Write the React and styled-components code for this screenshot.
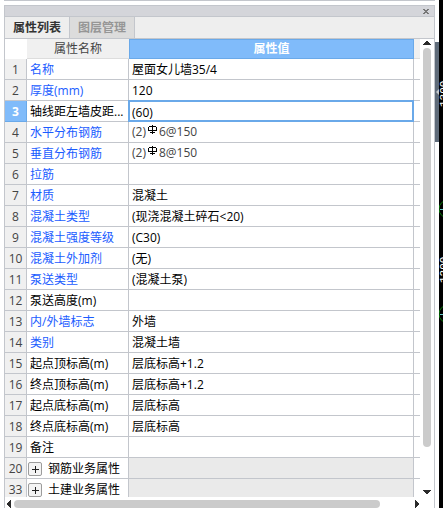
import React from "react";
import styled, { createGlobalStyle } from "styled-components";

const GlobalStyle = createGlobalStyle`
  *, *::before, *::after { box-sizing: border-box; }
  body { margin: 0; background: #fff; overflow: hidden; }
  body, button, input { font-family: "Open Sans", "Noto Sans CJK SC", sans-serif; font-size: 12px; }
`;

const line = "#c3c6cc";

const Workspace = styled.div`
  display: flex;
  height: 100vh;
  padding-left: 4px;
`;
const Dock = styled.div`
  flex: 1;
  min-width: 0;
  display: flex;
  flex-direction: column;
  border-top: 1px solid ${line};
  padding-top: 4px;
`;
const Panel = styled.section`
  flex: 1;
  min-height: 0;
  display: flex;
  flex-direction: column;
  border: 1px solid ${line};
  border-bottom: 0;
`;
const TitleBar = styled.header`
  display: flex;
  flex: none;
  justify-content: flex-end;
  align-items: center;
  height: 11px;
  padding-right: 5px;
  background: #d4d5da;
  border-bottom: 1px solid ${line};
`;
const CloseButton = styled.button`
  display: flex;
  padding: 0;
  border: 0;
  background: none;
`;
const TabBar = styled.div`
  display: flex;
  flex: none;
  height: 22px;
  background: #eee;
  border-bottom: 1px solid ${line};
`;
const Tab = styled.button`
  width: 65px;
  padding: 0;
  border: 0;
  border-right: 1px solid ${line};
  font-weight: 700;
  line-height: 20px;
  color: ${(p) => (p.$active ? "#333" : "#969696")};
  background: ${(p) => (p.$active ? "#eee" : "#dcdcdc")};
`;
const Body = styled.div`
  flex: 1;
  min-height: 0;
  display: grid;
  grid-template-columns: minmax(0, 1fr) 14px;
  grid-template-rows: minmax(0, 1fr) 11px;
`;
const Viewport = styled.div`
  overflow: hidden;
`;
const Table = styled.table`
  width: 100%;
  table-layout: fixed;
  border-collapse: separate;
  border-spacing: 0;
  line-height: 18px;
`;
const Col = styled.col`
  width: ${(p) => p.$width};
`;
const HeadRow = styled.tr`
  height: 20px;
`;
const HeadCell = styled.th`
  height: 20px;
  padding: 0;
  font-weight: ${(p) => (p.$selected ? 700 : 400)};
  color: ${(p) => (p.$selected ? "#fff" : "#444")};
  background: ${(p) => (p.$selected ? "#80bbfa" : p.$corner ? "#fff" : "#f0f0f0")};
  border: ${(p) => (p.$selected ? "1px solid #6aa9e9" : "0")};
  border-bottom: 1px solid ${(p) => (p.$selected ? "#6aa9e9" : p.$corner ? "#fff" : "#ddd")};
`;
const Cell = styled.td`
  height: 21px;
  padding: ${(p) => (p.$soft ? "0" : "2px")} 0 0 ${(p) => (p.$group ? "1px" : "3px")};
  white-space: nowrap;
  color: ${(p) => (p.$link ? "#1a5cff" : p.$soft ? "#444" : "#000")};
  background: ${(p) => (p.$shaded ? "#eaeaea" : "#fff")};
  border-right: 1px solid ${line};
  border-bottom: 1px solid ${line};
`;
const SelectedCell = styled(Cell)`
  position: relative;
  &::after {
    content: "";
    position: absolute;
    inset: -1px;
    border: 2px solid #6aa9e9;
    pointer-events: none;
  }
`;
const IndexCell = styled.th`
  height: 21px;
  padding: 2px 0 0;
  font-weight: ${(p) => (p.$selected ? 700 : 400)};
  color: ${(p) => (p.$selected ? "#fff" : "#444")};
  background: ${(p) => (p.$selected ? "#80bbfa" : "#f0f0f0")};
  border-right: 1px solid ${(p) => (p.$selected ? "#6aa9e9" : line)};
  border-bottom: 1px solid ${(p) => (p.$selected ? "#6aa9e9" : line)};
`;
const EdgeCell = styled.td`
  padding: 0;
  border-bottom: 1px solid ${(p) => (p.$head ? "#ddd" : line)};
  background: ${(p) => (p.$head ? "#f0f0f0" : "#fff")};
`;
const ValueInput = styled.input`
  display: block;
  width: 100%;
  height: 18px;
  padding: 0;
  border: 0;
  outline: 0;
  color: #000;
  background: transparent;
`;
const Group = styled.span`
  display: flex;
  align-items: center;
  gap: 6px;
`;
const ExpandButton = styled.button`
  display: flex;
  align-items: center;
  justify-content: center;
  width: 14px;
  height: 14px;
  padding: 0;
  border: 1px solid #9c9c9c;
  border-radius: 2px;
  background: #f4f4f4;
`;
const RebarIcon = styled.svg`
  display: inline-block;
  width: 9px;
  height: 9px;
  margin: 0 2px;
  vertical-align: 2px;
`;
const ScrollBar = styled.div`
  display: flex;
  flex-direction: ${(p) => (p.$vertical ? "column" : "row")};
  align-items: center;
  gap: 3px;
  padding: ${(p) => (p.$vertical ? "2px 2px 3px 2px" : "3px 1px 0 2px")};
`;
const Track = styled.div`
  flex: 1;
  align-self: stretch;
  display: flex;
  flex-direction: ${(p) => (p.$vertical ? "column" : "row")};
  padding: ${(p) => (p.$vertical ? "0 1px" : "0")};
`;
const Thumb = styled.div`
  flex: 0 0 ${(p) => p.$size};
  border-radius: 4px;
  background: #cbcbcb;
`;
const ArrowButton = styled.button`
  display: flex;
  padding: 0;
  border: 0;
  background: none;
`;
const Splitter = styled.div`
  flex: none;
  width: 4px;
  padding-top: 42px;
`;
const SplitHandle = styled.button`
  display: flex;
  align-items: center;
  width: 4px;
  height: 100px;
  padding: 0;
  border: 0;
  background: #5f6b79;
`;
const Drawing = styled.svg`
  flex: none;
  width: 4px;
  height: 100%;
  background: #000;
`;
const Dimension = styled.text`
  font-family: "Liberation Mono", monospace;
  font-size: 11px;
  fill: #fff;
`;

const rows = [
  { n: 1, name: "名称", value: "屋面女儿墙35/4", link: true },
  { n: 2, name: "厚度(mm)", value: "120", link: true },
  { n: 3, name: "轴线距左墙皮距...", value: "(60)", selected: true },
  { n: 4, name: "水平分布钢筋", rebar: ["(2)", "6@150"], link: true },
  { n: 5, name: "垂直分布钢筋", rebar: ["(2)", "8@150"], link: true },
  { n: 6, name: "拉筋", value: "", link: true },
  { n: 7, name: "材质", value: "混凝土", link: true },
  { n: 8, name: "混凝土类型", value: "(现浇混凝土碎石<20)", link: true },
  { n: 9, name: "混凝土强度等级", value: "(C30)", link: true },
  { n: 10, name: "混凝土外加剂", value: "(无)", link: true },
  { n: 11, name: "泵送类型", value: "(混凝土泵)", link: true },
  { n: 12, name: "泵送高度(m)", value: "" },
  { n: 13, name: "内/外墙标志", value: "外墙", link: true },
  { n: 14, name: "类别", value: "混凝土墙", link: true },
  { n: 15, name: "起点顶标高(m)", value: "层底标高+1.2" },
  { n: 16, name: "终点顶标高(m)", value: "层底标高+1.2" },
  { n: 17, name: "起点底标高(m)", value: "层底标高" },
  { n: 18, name: "终点底标高(m)", value: "层底标高" },
  { n: 19, name: "备注", value: "" },
  { n: 20, name: "钢筋业务属性", group: true },
  { n: 33, name: "土建业务属性", group: true },
];

function Rebar() {
  return (
    <RebarIcon viewBox="0 0 9 9" aria-hidden="true" shapeRendering="crispEdges">
      <path d="M4.5 0V9M1 1.5H8M0 5.5H9M2 7.5H7M0.5 2V5M8.5 2V5" fill="none" stroke="#000" />
    </RebarIcon>
  );
}

const arrows = {
  up: [8, 4, "M3 0H5V1H6V2H7V3H8V4H0V3H1V2H2V1H3Z"],
  down: [8, 4, "M0 0H8V1H7V2H6V3H5V4H3V3H2V2H1V1H0Z"],
  left: [4, 8, "M4 0V8H3V7H2V6H1V5H0V3H1V2H2V1H3V0Z"],
  right: [4, 8, "M0 0V8H1V7H2V6H3V5H4V3H3V2H2V1H1V0Z"],
};

function Arrow({ dir, label }) {
  const [w, h, d] = arrows[dir];
  return (
    <ArrowButton type="button" aria-label={label}>
      <svg width={w} height={h}><path d={d} fill="#2b2b2b" /></svg>
    </ArrowButton>
  );
}

function PropertyRow({ row }) {
  return (
    <tr>
      <IndexCell scope="row" $selected={row.selected}>{row.n}</IndexCell>
      <Cell $link={row.link} $group={row.group}>
        {row.group ? (
          <Group>
            <ExpandButton type="button" aria-label={`展开${row.name}`}>
              <svg width="7" height="7"><path d="M3.5 0V7M0 3.5H7" stroke="#222" /></svg>
            </ExpandButton>
            {row.name}
          </Group>
        ) : row.name}
      </Cell>
      {row.selected ? (
        <SelectedCell>
          <ValueInput aria-label={row.name} defaultValue={row.value} />
        </SelectedCell>
      ) : (
        <Cell $shaded={row.group} $soft={Boolean(row.rebar)}>
          {row.rebar ? <>{row.rebar[0]}<Rebar />{row.rebar[1]}</> : row.value}
        </Cell>
      )}
      <EdgeCell />
    </tr>
  );
}

export default function App() {
  return (
    <>
      <GlobalStyle />
      <Workspace>
        <Dock>
          <Panel>
            <TitleBar>
              <CloseButton type="button" aria-label="关闭">
                <svg width="6" height="5" shapeRendering="crispEdges">
                  <path d="M0 0H2V1H4V0H6V1H5V2H4V3H5V4H6V5H4V4H2V5H0V4H1V3H2V2H1V1H0Z" fill="#777" />
                </svg>
              </CloseButton>
            </TitleBar>
            <TabBar role="tablist">
              <Tab type="button" role="tab" aria-selected="true" $active>属性列表</Tab>
              <Tab type="button" role="tab" aria-selected="false">图层管理</Tab>
            </TabBar>
            <Body>
              <Viewport>
                <Table>
                  <colgroup>
                    <Col $width="22px" />
                    <Col $width="102px" />
                    <Col $width="auto" />
                    <Col $width="6px" />
                  </colgroup>
                  <thead>
                    <HeadRow>
                      <HeadCell $corner />
                      <HeadCell scope="col">属性名称</HeadCell>
                      <HeadCell scope="col" $selected>属性值</HeadCell>
                      <EdgeCell $head />
                    </HeadRow>
                  </thead>
                  <tbody>
                    {rows.map((row) => <PropertyRow key={row.n} row={row} />)}
                  </tbody>
                </Table>
              </Viewport>
              <ScrollBar $vertical>
                <Arrow dir="up" label="向上滚动" />
                <Track $vertical><Thumb $size="91%" /></Track>
                <Arrow dir="down" label="向下滚动" />
              </ScrollBar>
              <ScrollBar>
                <Arrow dir="left" label="向左滚动" />
                <Track><Thumb $size="92%" /></Track>
                <Arrow dir="right" label="向右滚动" />
              </ScrollBar>
            </Body>
          </Panel>
        </Dock>
        <Splitter>
          <SplitHandle type="button" aria-label="折叠面板">
            <svg width="4" height="6"><path d="M4 0V6L1 3Z" fill="#c5c9ce" /></svg>
          </SplitHandle>
        </Splitter>
        <Drawing aria-hidden="true">
          <Dimension transform="translate(8 107) rotate(-90)">1300</Dimension>
          <circle cx="9" cy="209" r="9" fill="none" stroke="#0a7a0a" />
          <Dimension transform="translate(8 283) rotate(-90)">1200</Dimension>
          <circle cx="9" cy="314" r="9" fill="none" stroke="#0a7a0a" />
          <path d="M1 209.5H4M1 314.5H4" stroke="#6cc" />
        </Drawing>
      </Workspace>
    </>
  );
}
